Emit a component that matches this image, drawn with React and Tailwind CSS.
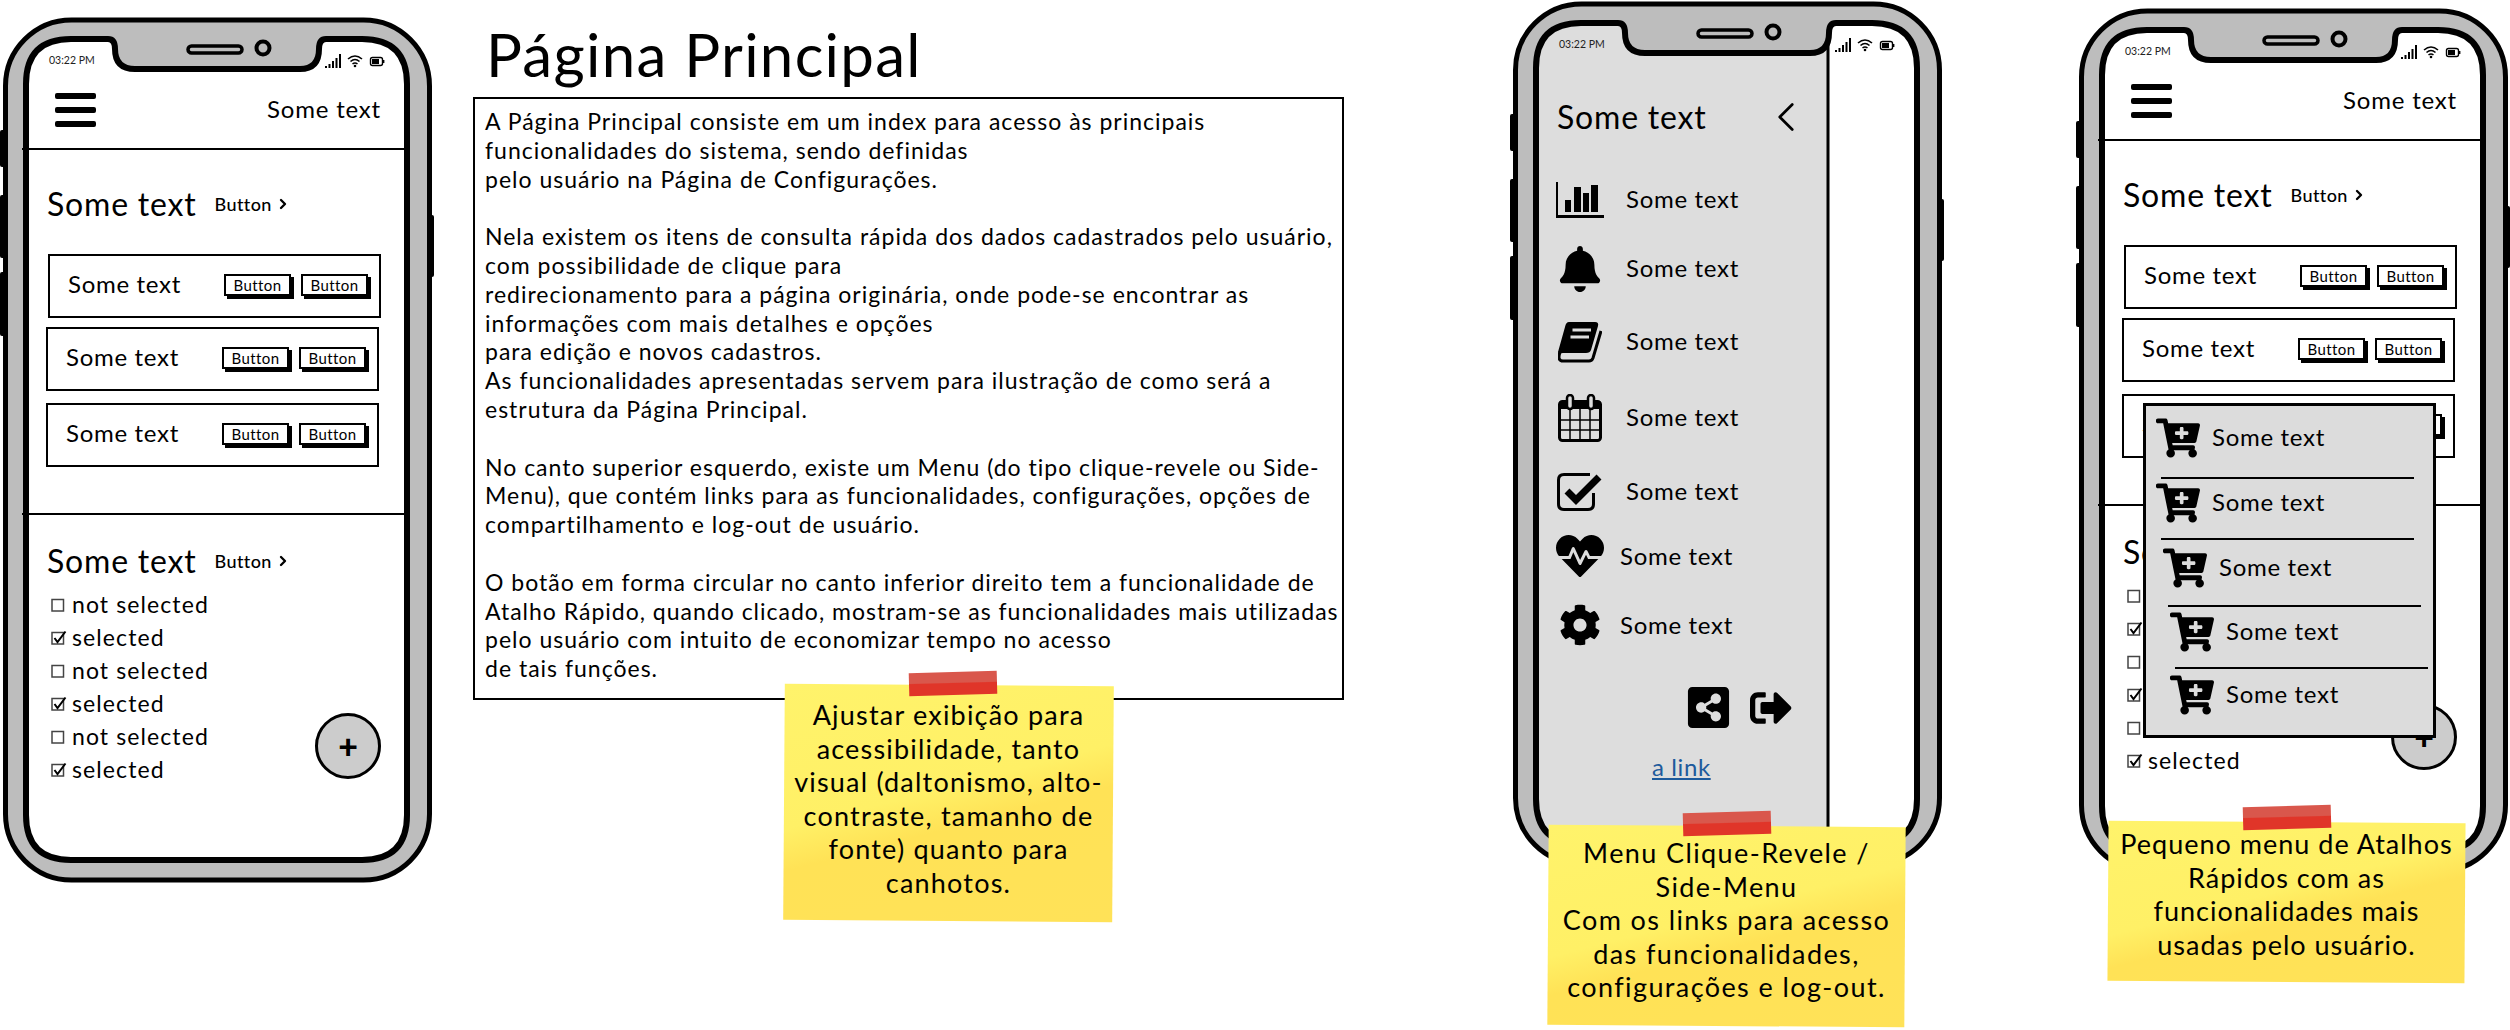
import React from "react";
import { ChevronLeft, ChevronRight } from "lucide-react";
import { FaBell, FaCartPlus, FaCog, FaHeartbeat, FaShareAltSquare, FaSignOutAlt } from "react-icons/fa";

const SCREEN_PATH =
  "M26 68Q26 23 71 23L108 23Q115 23 115 33Q115 53 135 53L300 53Q319 53 319 33Q319 23 326 23L362 23Q407 23 407 68L407 799Q407 844 362 844L71 844Q26 844 26 799Z";

const PhoneFrame = ({ sideMenu }) => (
  <svg className="absolute inset-0" width="436" height="870" viewBox="0 0 436 870">
    <rect x="0" y="114" width="6" height="37" rx="2" fill="#000" />
    <rect x="0" y="179" width="6" height="63" rx="2" fill="#000" />
    <rect x="0" y="256" width="6" height="64" rx="2" fill="#000" />
    <rect x="427" y="199" width="7" height="62" rx="2" fill="#000" />
    <rect x="5.5" y="4" width="424" height="860" rx="66" fill="#bdbdbd" stroke="#000" strokeWidth="5" />
    <path d={SCREEN_PATH} fill="#fff" />
    {sideMenu && (
      <>
        <clipPath id="screen-clip">
          <path d={SCREEN_PATH} />
        </clipPath>
        <rect x="26" y="20" width="292" height="830" fill="#dddddd" clipPath="url(#screen-clip)" />
        <rect x="316.5" y="40" width="3" height="805" fill="#000" />
      </>
    )}
    <path d={SCREEN_PATH} fill="none" stroke="#000" strokeWidth="6" />
    <rect x="188" y="30" width="54" height="7" rx="3.5" fill="#bdbdbd" stroke="#000" strokeWidth="3.5" />
    <circle cx="263" cy="32" r="6.5" fill="#bdbdbd" stroke="#000" strokeWidth="4" />
  </svg>
);

const StatusIcons = () => (
  <svg width="60" height="16" viewBox="0 0 60 16">
    <rect x="0" y="12" width="2" height="2" fill="#000" />
    <rect x="3.5" y="10" width="2" height="4" fill="#000" />
    <rect x="7" y="7" width="2" height="7" fill="#000" />
    <rect x="10.5" y="4" width="2" height="10" fill="#000" />
    <rect x="14" y="0" width="2" height="14" fill="#000" />
    <path d="M23 5Q30 -1 37 5M25.5 7.5Q30 3.5 34.5 7.5M27.5 10Q30 8 32.5 10" fill="none" stroke="#000" strokeWidth="1.6" />
    <circle cx="30" cy="12" r="1.3" fill="#000" />
    <rect x="45.5" y="3.5" width="12" height="8" rx="2" fill="none" stroke="#000" strokeWidth="1.4" />
    <rect x="47" y="5" width="7" height="5" fill="#000" />
    <rect x="58" y="6" width="1.4" height="3" fill="#000" />
  </svg>
);

const Phone = ({ className, sideMenu, children }) => (
  <div className={`absolute w-[436px] h-[870px] ${className}`}>
    <PhoneFrame sideMenu={sideMenu} />
    <div className="absolute left-[29px] top-[26px] w-[376px] h-[815px]">{children}</div>
    <span className="absolute left-[49px] top-[37px] text-[10.5px] leading-[14px] text-[#222]">03:22 PM</span>
    <div className="absolute left-[325px] top-[38px]">
      <StatusIcons />
    </div>
  </div>
);

const Box = ({ checked }) => (
  <svg width="16" height="16" viewBox="0 0 16 16" className="shrink-0">
    <rect x="1" y="2.5" width="11.5" height="11.5" fill="#fff" stroke="#444" strokeWidth="1.5" />
    {checked && <path d="M3.5 8L6.5 12L14.5 1.5" fill="none" stroke="#000" strokeWidth="2" />}
  </svg>
);

const SmallButton = () => (
  <button className="w-[67px] h-[22px] border-2 border-black bg-white shadow-[3px_3px_0_#000] text-[15px] leading-[18px] tracking-[0.4px] text-center">
    Button
  </button>
);

const ListRow = ({ className }) => (
  <div className={`w-[333px] h-[64px] border-2 border-black flex items-center justify-between pl-[18px] pr-[11px] ${className}`}>
    <span className="text-[24px] tracking-[0.7px] mb-[5px]">Some text</span>
    <div className="flex gap-[10px] mb-[2px]">
      <SmallButton />
      <SmallButton />
    </div>
  </div>
);

const SectionTitle = ({ className }) => (
  <div className={`flex items-center h-[40px] pl-[18px] gap-[18px] ${className}`}>
    <span className="text-[32px] leading-[40px] tracking-[0.8px]">Some text</span>
    <span className="flex items-center gap-[3px] text-[18px] font-medium tracking-[0.4px]">
      Button
      <ChevronRight size={16} strokeWidth={3.5} />
    </span>
  </div>
);

const checks = [false, true, false, true, false, true];

const MainScreen = () => (
  <>
    <div className="h-[108px] -ml-[7px] w-[383px] border-b-2 border-black flex items-center justify-between pt-[30px] pl-[33px] pr-[24px]">
      <div className="flex flex-col gap-[8px] w-[41px]">
        <div className="h-[6px] rounded-[2px] bg-black" />
        <div className="h-[6px] rounded-[2px] bg-black" />
        <div className="h-[6px] rounded-[2px] bg-black" />
      </div>
      <span className="text-[24px] tracking-[0.8px] mb-[2px]">Some text</span>
    </div>
    <SectionTitle className="mt-[34px]" />
    <ListRow className="mt-[30px] ml-[19px]" />
    <ListRow className="mt-[9px] ml-[17px]" />
    <ListRow className="mt-[12px] ml-[17px]" />
    <div className="mt-[46px] -ml-[7px] w-[383px] h-[2px] bg-black" />
    <SectionTitle className="mt-[26px]" />
    <div className="mt-[7px] pl-[22px]">
      {checks.map((on, i) => (
        <div key={i} className="flex items-center gap-[5px] h-[33px] text-[23px] tracking-[1.1px]">
          <Box checked={on} />
          <span>{on ? "selected" : "not selected"}</span>
        </div>
      ))}
    </div>
  </>
);

const Fab = () => (
  <div className="absolute left-[286px] top-[671px] w-[66px] h-[66px] rounded-full border-[3px] border-black bg-[#cccccc] flex items-center justify-center text-[34px] font-black leading-none">
    +
  </div>
);

const ChartIcon = () => (
  <svg width="48" height="36" viewBox="0 0 48 36">
    <rect x="0" y="0" width="2" height="36" fill="#000" />
    <rect x="0" y="33" width="48" height="3" fill="#000" />
    <rect x="9" y="18" width="6" height="12" fill="#000" />
    <rect x="18" y="5" width="7" height="25" fill="#000" />
    <rect x="27" y="11" width="6" height="19" fill="#000" />
    <rect x="35" y="3" width="7" height="27" fill="#000" />
  </svg>
);

const BookIcon = () => (
  <svg width="44" height="41" viewBox="0 0 44 41">
    <path d="M11 0H37Q41 0 40 4L33 28Q32 31 28 31H5Q1 31 2 35L0 30L7 5Q8 0 11 0Z" fill="#000" />
    <path d="M2 30Q-1 39 5 39H31Q34 39 35 36L43 9" fill="none" stroke="#000" strokeWidth="3" />
    <path d="M14.5 8H33M12.5 15H31" stroke="#ddd" strokeWidth="3" />
  </svg>
);

const CalendarIcon = () => (
  <svg width="44" height="48" viewBox="0 0 44 48">
    <rect x="1.5" y="7.5" width="41" height="39" rx="3" fill="none" stroke="#000" strokeWidth="3" />
    <rect x="1.5" y="8" width="41" height="7" fill="#000" />
    <rect x="9" y="1" width="6" height="14" rx="3" fill="#ddd" stroke="#000" strokeWidth="2.5" />
    <rect x="30" y="1" width="6" height="14" rx="3" fill="#ddd" stroke="#000" strokeWidth="2.5" />
    <path d="M12 15V46M22 15V46M32 15V46M2 26H42M2 36H42" stroke="#000" strokeWidth="1.5" />
  </svg>
);

const CheckIcon = () => (
  <svg width="46" height="38" viewBox="0 0 46 38">
    <path d="M33 1.5H7Q1.5 1.5 1.5 7V31Q1.5 36.5 7 36.5H31Q36.5 36.5 36.5 31V20" fill="none" stroke="#000" strokeWidth="3" />
    <path d="M10 18L19 27L42 4" fill="none" stroke="#000" strokeWidth="7" />
  </svg>
);

const menuItems = [
  { icon: <ChartIcon />, row: "mt-[40px] gap-[22px]", text: "mb-[3px]" },
  { icon: <FaBell size={46} />, row: "mt-[23px] gap-[22px]", text: "mb-[3px]" },
  { icon: <BookIcon />, row: "mt-[27px] gap-[22px]", text: "mb-[3px]" },
  { icon: <CalendarIcon />, row: "mt-[30px] gap-[22px]", text: "mb-[3px]" },
  { icon: <CheckIcon />, row: "mt-[28px] gap-[22px]", text: "mb-[3px]" },
  { icon: <FaHeartbeat size={48} />, row: "mt-[18px] gap-[16px]", text: "mb-[1px]" },
  { icon: <FaCog size={42} />, row: "mt-[23px] gap-[16px]", text: "mb-[1px]" },
];

const SideScreen = () => (
  <div className="pt-[71px]">
    <div className="w-[253px] pl-[18px] h-[40px] flex items-center justify-between">
      <span className="text-[32px] leading-[40px] tracking-[0.8px]">Some text</span>
      <ChevronLeft size={50} strokeWidth={1.3} className="-mr-[19px]" />
    </div>
    {menuItems.map((item, i) => (
      <div key={i} className={`flex items-center h-[46px] ml-[17px] ${item.row}`}>
        <div className="w-[48px] flex justify-center">{item.icon}</div>
        <span className={`text-[24px] tracking-[0.7px] ${item.text}`}>Some text</span>
      </div>
    ))}
    <div className="mt-[36px] w-[253px] flex justify-end items-center gap-[18px]">
      <FaShareAltSquare size={47} />
      <FaSignOutAlt size={42} />
    </div>
    <a className="block mt-[22px] ml-[113px] text-[24px] leading-[28px] tracking-[0.6px] text-[#1d5a9c] underline">a link</a>
  </div>
);

const shortcutRows = [
  { item: "ml-[10px]", line: "mt-[17px] ml-[15px]" },
  { item: "mt-[2px] ml-[10px]", line: "mt-[13px] ml-[15px]" },
  { item: "mt-[6px] ml-[17px]", line: "mt-[15px] ml-[22px]" },
  { item: "mt-[3px] ml-[24px]", line: "mt-[13px] ml-[29px]" },
  { item: "mt-[4px] ml-[24px]", line: "" },
];

const ShortcutMenu = () => (
  <div className="absolute left-[38px] top-[370px] w-[293px] h-[335px] border-[3px] border-black bg-[#dcdcdc] pt-[10px]">
    {shortcutRows.map((row, i) => (
      <div key={i}>
        <div className={`flex items-center h-[44px] gap-[12px] ${row.item}`}>
          <FaCartPlus size={44} />
          <span className="text-[24px] tracking-[0.7px] mb-[2px]">Some text</span>
        </div>
        {row.line && <div className={`w-[253px] h-[2px] bg-black ${row.line}`} />}
      </div>
    ))}
  </div>
);

const Sticky = ({ className, tape, lines, textClass }) => (
  <div className={`absolute ${className}`}>
    <div className="absolute inset-0 rotate-[0.4deg] bg-[linear-gradient(165deg,#fff36b_0%,#fff066_45%,#ffe256_58%,#ffe258_100%)]" />
    <div className={`absolute w-[88px] h-[23px] -rotate-[1.5deg] bg-[linear-gradient(180deg,#d9574c_0%,#d9574c_45%,#e03529_50%,#e03529_100%)] ${tape}`} />
    <div className={`relative text-center text-[27px] leading-[33.5px] ${textClass}`}>
      {lines.map((line) => (
        <div key={line}>{line}</div>
      ))}
    </div>
  </div>
);

const paragraph = [
  "A Página Principal consiste em um index para acesso às principais",
  "funcionalidades do sistema, sendo definidas",
  "pelo usuário na Página de Configurações.",
  "",
  "Nela existem os itens de consulta rápida dos dados cadastrados pelo usuário,",
  "com possibilidade de clique para",
  "redirecionamento para a página originária, onde pode-se encontrar as",
  "informações com mais detalhes e opções",
  "para edição e novos cadastros.",
  "As funcionalidades apresentadas servem para ilustração de como será a",
  "estrutura da Página Principal.",
  "",
  "No canto superior esquerdo, existe um Menu (do tipo clique-revele ou Side-",
  "Menu), que contém links para as funcionalidades, configurações, opções de",
  "compartilhamento e log-out de usuário.",
  "",
  "O botão em forma circular no canto inferior direito tem a funcionalidade de",
  "Atalho Rápido, quando clicado, mostram-se as funcionalidades mais utilizadas",
  "pelo usuário com intuito de economizar tempo no acesso",
  "de tais funções.",
];

export default function App() {
  return (
    <div className="relative w-[2510px] h-[1030px] overflow-hidden bg-white text-black font-[Lato,sans-serif]">
      <Phone className="left-0 top-[16px]">
        <MainScreen />
        <Fab />
      </Phone>

      {/* description block */}
      <div className="absolute left-[473px] top-[11px] w-[871px]">
        <h1 className="pl-[13px] text-[60px] leading-[86px] font-normal tracking-[1.3px]">Página Principal</h1>
        <div className="h-[603px] border-2 border-black pl-[10px] pt-[8px] text-[23px] leading-[28.8px] tracking-[1px]">
          {paragraph.map((line, i) => (
            <div key={i} className="h-[28.8px] whitespace-nowrap">{line}</div>
          ))}
        </div>
      </div>

      <Phone className="left-[1510px] top-0" sideMenu>
        <SideScreen />
      </Phone>

      <Phone className="left-[2076px] top-[7px]">
        <MainScreen />
        <Fab />
        <ShortcutMenu />
      </Phone>

      <Sticky
        className="left-[784px] top-[685px] w-[329px] h-[236px] pt-[13px]"
        tape="left-[125px] -top-[13px]"
        textClass="tracking-[1.2px]"
        lines={["Ajustar exibição para", "acessibilidade, tanto", "visual (daltonismo, alto-", "contraste, tamanho de", "fonte) quanto para", "canhotos."]}
      />
      <Sticky
        className="left-[1548px] top-[826px] w-[357px] h-[200px] pt-[10px]"
        tape="left-[135px] -top-[14px]"
        textClass="tracking-[1.4px]"
        lines={["Menu Clique-Revele /", "Side-Menu", "Com os links para acesso", "das funcionalidades,", "configurações e log-out."]}
      />
      <Sticky
        className="left-[2108px] top-[822px] w-[357px] h-[160px] pt-[5px]"
        tape="left-[135px] -top-[16px]"
        textClass="tracking-[1px]"
        lines={["Pequeno menu de Atalhos", "Rápidos com as", "funcionalidades mais", "usadas pelo usuário."]}
      />
    </div>
  );
}
